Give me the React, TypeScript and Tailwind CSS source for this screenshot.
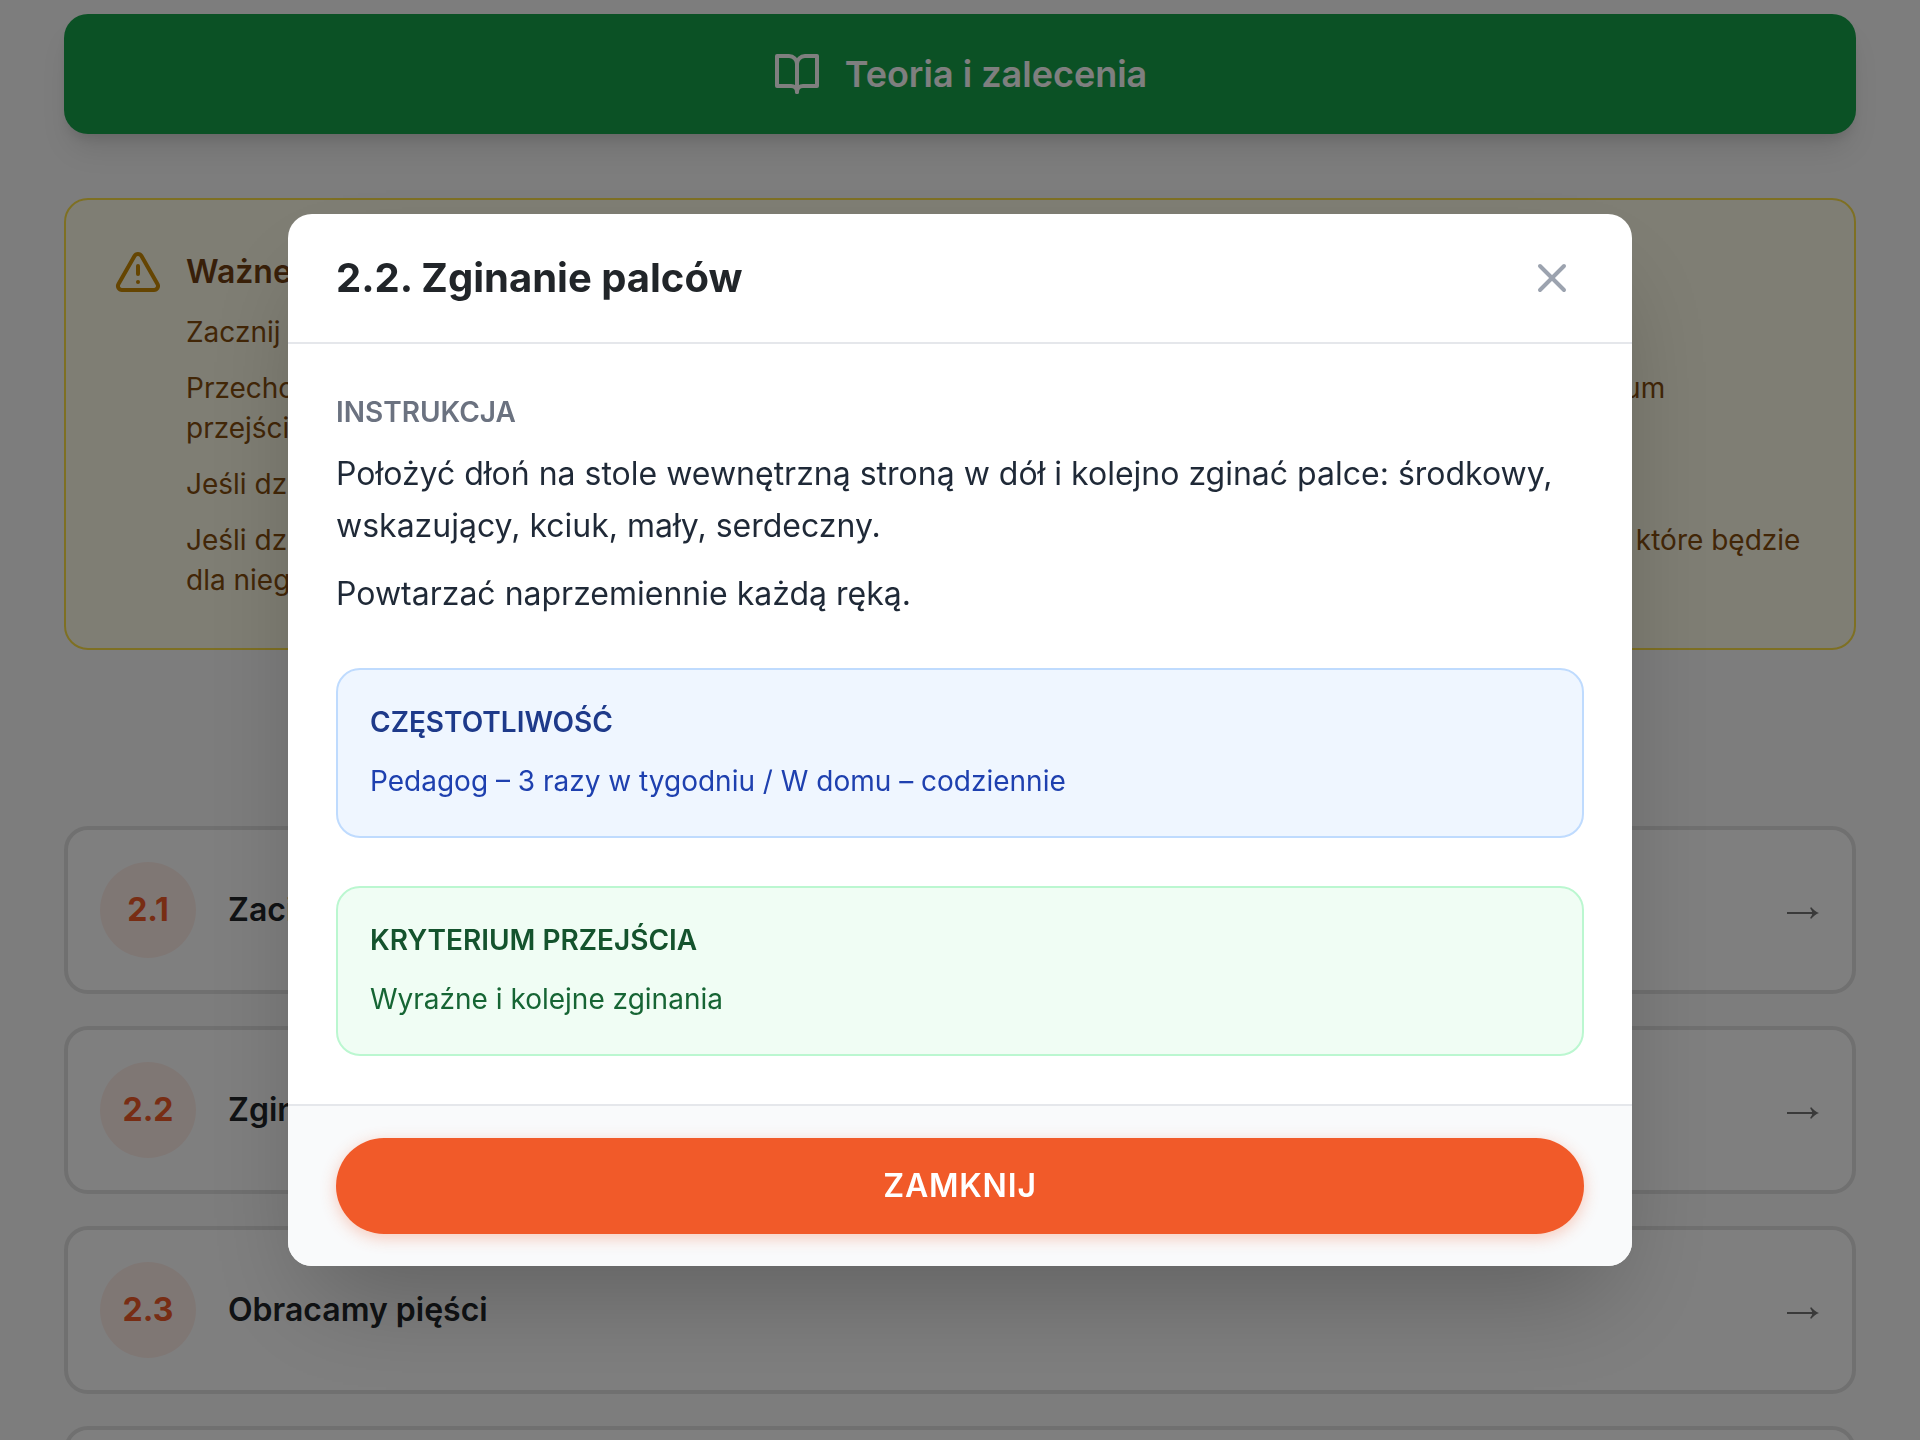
import { useState } from "react";
import { TriangleAlert, X } from "lucide-react";

const exercises = [
  { id: "2.1", title: "Zaciskanie dłoni" },
  { id: "2.2", title: "Zginanie palców" },
  { id: "2.3", title: "Obracamy pięści" },
  { id: "2.4", title: "Łączenie palców" },
];

function BookIcon() {
  return (
    <svg
      className="size-12"
      viewBox="0 0 24 24"
      fill="none"
      stroke="currentColor"
      strokeWidth="2"
      strokeLinecap="round"
      strokeLinejoin="round"
      aria-hidden="true"
    >
      <path d="M2 3h6a4 4 0 0 1 4 4v14a3 3 0 0 0-3-3H2z" />
      <path d="M22 3h-6a4 4 0 0 0-4 4v14a3 3 0 0 1 3-3h7z" />
    </svg>
  );
}

function ArrowIcon() {
  return (
    <svg
      className="h-8 w-[34px] shrink-0 text-[#757575]"
      viewBox="0 0 34 32"
      fill="currentColor"
      aria-hidden="true"
    >
      <path d="M1 18h27v2H1z" />
      <path d="M25 13c2 2.600 5 4.800 8 6c-3 1.200-6 3.400-8 6l-.8-1.200c1.200-1.600 2-3.200 2.400-4.800c-.4-1.600-1.200-3.200-2.400-4.800z" />
    </svg>
  );
}

function ImportantNote() {
  return (
    <section className="mt-16 flex gap-6 rounded-3xl border-2 border-[#fde047] bg-[#fefce8] p-12">
      <TriangleAlert className="size-12 shrink-0 text-[#ca8a04]" />
      <div className="flex flex-1 flex-col gap-4 text-[28px] leading-10 text-[#854d0e]">
        <h2 className="text-[32px] leading-12 font-semibold text-[#713f12]">
          Ważne zasady
        </h2>
        <p>Zacznij od pierwszego ćwiczenia w zestawie.</p>
        <p>
          Przechodź do kolejnego ćwiczenia dopiero wtedy, gdy dziecko wykonuje
          poprzednie pewnie i spełnia kryterium
          <br />
          przejścia.
        </p>
        <p>Jeśli dziecko ma trudność, wróć do poprzedniego ćwiczenia.</p>
        <p>
          Jeśli dziecko nie chce wykonywać danego ćwiczenia, zrób przerwę albo
          zaproponuj inne zadanie z zestawu, które będzie dla niego
          łatwiejsze.
        </p>
      </div>
    </section>
  );
}

function ExerciseModal({ onClose }: { onClose: () => void }) {
  return (
    <div className="fixed inset-0 flex items-center justify-center bg-black/50 pt-10">
      <div
        role="dialog"
        aria-modal="true"
        aria-labelledby="exercise-title"
        className="w-full max-w-[1344px] overflow-hidden rounded-3xl bg-white shadow-[0_50px_100px_-24px_rgba(0,0,0,0.25)]"
      >
        <div className="flex items-center justify-between border-b-2 border-[#e5e7eb] px-12 py-8">
          <h2 id="exercise-title" className="text-[40px] leading-14 font-bold text-[#212529]">
            2.2. Zginanie palców
          </h2>
          <button
            type="button"
            aria-label="Zamknij okno"
            onClick={onClose}
            className="p-2 text-[#9ca3af]"
          >
            <X className="size-12" />
          </button>
        </div>

        <div className="flex flex-col gap-12 p-12">
          <div className="flex flex-col gap-4 text-[32px] leading-[52px] text-[#1f2937]">
            <h3 className="text-[28px] leading-10 font-semibold text-[#6b7280]">
              INSTRUKCJA
            </h3>
            <p>
              Położyć dłoń na stole wewnętrzną stroną w dół i kolejno zginać
              palce: środkowy, wskazujący, kciuk, mały, serdeczny.
            </p>
            <p>Powtarzać naprzemiennie każdą ręką.</p>
          </div>

          <div className="flex flex-col gap-4 rounded-3xl border-2 border-[#bfdbfe] bg-[#eff6ff] p-8 text-[28px]">
            <h3 className="leading-10 font-semibold text-[#1e3a8a]">
              CZĘSTOTLIWOŚĆ
            </h3>
            <p className="leading-[46px] text-[#1e40af]">
              Pedagog – 3 razy w tygodniu / W domu – codziennie
            </p>
          </div>

          <div className="flex flex-col gap-4 rounded-3xl border-2 border-[#bbf7d0] bg-[#f0fdf4] p-8 text-[28px]">
            <h3 className="leading-10 font-semibold text-[#14532d]">
              KRYTERIUM PRZEJŚCIA
            </h3>
            <p className="leading-[46px] text-[#166534]">
              Wyraźne i kolejne zginania
            </p>
          </div>
        </div>

        <div className="border-t-2 border-[#e5e7eb] bg-[#f9fafb] px-12 py-8">
          <button
            type="button"
            onClick={onClose}
            className="h-24 w-full rounded-full bg-[#f15a29] text-[32px] font-semibold tracking-wide text-white shadow-[0_4px_16px_rgba(241,90,41,0.3)]"
          >
            ZAMKNIJ
          </button>
        </div>
      </div>
    </div>
  );
}

function App() {
  const [open, setOpen] = useState(true);

  return (
    <main className="h-screen overflow-hidden bg-[#fafafa] px-16 pt-3.5 font-['Inter',sans-serif]">
      <button
        type="button"
        className="flex h-30 w-full items-center justify-center gap-6 rounded-3xl bg-[#16a34a] text-4xl font-semibold text-white shadow-[0_20px_30px_-6px_rgba(0,0,0,0.1),0_8px_12px_-4px_rgba(0,0,0,0.1)]"
      >
        <BookIcon />
        Teoria i zalecenia
      </button>

      <ImportantNote />

      <div className="mt-44 flex flex-col gap-8">
        {exercises.map((exercise) => (
          <button
            key={exercise.id}
            type="button"
            onClick={() => setOpen(true)}
            className="flex items-center gap-8 rounded-3xl border-4 border-[#e0e0e0] bg-white p-8 text-left text-[32px]"
          >
            <span className="flex size-24 items-center justify-center rounded-full bg-[#f15a29]/10 font-bold text-[#f15a29]">
              {exercise.id}
            </span>
            <span className="flex-1 font-semibold text-[#212529]">
              {exercise.title}
            </span>
            <ArrowIcon />
          </button>
        ))}
      </div>

      {open && <ExerciseModal onClose={() => setOpen(false)} />}
    </main>
  );
}

export default App;
